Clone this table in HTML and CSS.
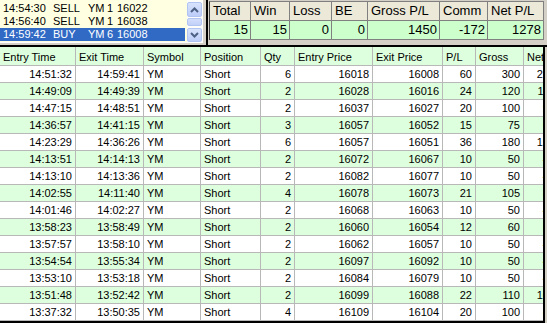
FILE: index.html
```html
<!DOCTYPE html>
<html>
<head>
    <title>Trade Log</title>
    <link rel="stylesheet" href="styles.css">
</head>
<body>
    <div class="top">
        <div class="list">
            <div class="items">
                <div class="item"><span class="t">14:54:30</span><span class="side">SELL</span><span class="sym">YM</span><span class="qty">1</span><span>16022</span></div>
                <div class="item"><span class="t">14:56:40</span><span class="side">SELL</span><span class="sym">YM</span><span class="qty">1</span><span>16038</span></div>
                <div class="item sel"><span class="t">14:59:42</span><span class="side">BUY</span><span class="sym">YM</span><span class="qty">6</span><span>16008</span></div>
            </div>
            <div class="sb">
                <div class="sb-btn">
                    <svg width="9" height="6" viewBox="0 0 9 6"><path d="M1 5 L4.5 1.5 L8 5" fill="none" stroke="#4d6185" stroke-width="2"/></svg>
                </div>
                <div class="sb-track"><div class="sb-thumb"></div></div>
                <div class="sb-btn">
                    <svg width="9" height="6" viewBox="0 0 9 6"><path d="M1 1 L4.5 4.5 L8 1" fill="none" stroke="#4d6185" stroke-width="2"/></svg>
                </div>
            </div>
        </div>
        <div class="split"></div>
        <div class="stats">
            <div class="sh">Total</div>
            <div class="sh">Win</div>
            <div class="sh">Loss</div>
            <div class="sh">BE</div>
            <div class="sh">Gross P/L</div>
            <div class="sh">Comm</div>
            <div class="sh">Net P/L</div>
            <div class="sv">15</div>
            <div class="sv">15</div>
            <div class="sv">0</div>
            <div class="sv">0</div>
            <div class="sv">1450</div>
            <div class="sv">-172</div>
            <div class="sv">1278</div>
        </div>
    </div>

    <div class="hline"></div>

    <div class="grid">
        <div class="row head">
            <div>Entry Time</div><div>Exit Time</div><div>Symbol</div><div>Position</div><div>Qty</div>
            <div>Entry Price</div><div>Exit Price</div><div>P/L</div><div>Gross</div><div>Net</div>
        </div>
        <div id="rows"></div>
    </div>

    <script>
        // entry, exit, qty, entry price, exit price, p/l, gross, net
        const trades = [
            ['14:51:32', '14:59:41', 6, 16018, 16008, 60, 300, 276],
            ['14:49:09', '14:49:39', 2, 16028, 16016, 24, 120, 112],
            ['14:47:15', '14:48:51', 2, 16037, 16027, 20, 100, 92],
            ['14:36:57', '14:41:15', 3, 16057, 16052, 15, 75, 63],
            ['14:23:29', '14:36:26', 6, 16057, 16051, 36, 180, 156],
            ['14:13:51', '14:14:13', 2, 16072, 16067, 10, 50, 42],
            ['14:13:10', '14:13:36', 2, 16082, 16077, 10, 50, 42],
            ['14:02:55', '14:11:40', 4, 16078, 16073, 21, 105, 89],
            ['14:01:46', '14:02:27', 2, 16068, 16063, 10, 50, 42],
            ['13:58:23', '13:58:49', 2, 16060, 16054, 12, 60, 52],
            ['13:57:57', '13:58:10', 2, 16062, 16057, 10, 50, 42],
            ['13:54:54', '13:55:34', 2, 16097, 16092, 10, 50, 42],
            ['13:53:10', '13:53:18', 2, 16084, 16079, 10, 50, 42],
            ['13:51:48', '13:52:42', 2, 16099, 16088, 22, 110, 102],
            ['13:37:32', '13:50:35', 4, 16109, 16104, 20, 100, 84]
        ];

        const rowsEl = document.getElementById('rows');
        trades.forEach((t, i) => {
            const row = document.createElement('div');
            row.className = 'row' + (i % 2 ? ' alt' : '');
            row.innerHTML =
                '<div class="r">' + t[0] + '</div>' +
                '<div class="r">' + t[1] + '</div>' +
                '<div>YM</div>' +
                '<div>Short</div>' +
                '<div class="r">' + t[2] + '</div>' +
                '<div class="r">' + t[3] + '</div>' +
                '<div class="r">' + t[4] + '</div>' +
                '<div class="r">' + t[5] + '</div>' +
                '<div class="r">' + t[6] + '</div>' +
                '<div class="r net">' + t[7] + '</div>';
            rowsEl.appendChild(row);
        });
    </script>
</body>
</html>
```

FILE: styles.css
```css
body { margin: 0; width: 547px; height: 323px; overflow: hidden; background: #d4d0c8; font-family: "Liberation Sans", Arial, sans-serif; font-size: 11px; color: #000; }

.top { display: flex; height: 45px; }

.list { display: flex; width: 202px; height: 42px; background: #ffffe1; border-right: 1px solid #fff; border-bottom: 1px solid #fff; }
.items { width: 185px; padding-top: 2px; }
.item { display: flex; height: 13px; line-height: 13px; white-space: nowrap; }
.item.sel { background: #316ac5; color: #fff; }
.item .t { width: 50px; padding-left: 3px; }
.item .side { width: 35px; }
.item .sym { width: 19px; }
.item .qty { width: 10px; }

.sb { width: 15px; margin-left: 2px; padding-top: 2px; display: flex; flex-direction: column; background: #fdfdfa; }
.sb-btn { height: 14px; display: flex; align-items: center; justify-content: center; background: linear-gradient(#d8e3fc, #bccdf8); border: 1px solid #b1c4f2; border-radius: 2px; box-sizing: border-box; }
.sb-btn:first-child { height: 15px; }
.sb-track { height: 11px; padding-top: 1px; box-sizing: border-box; }
.sb-thumb { height: 8px; background: linear-gradient(#d3defb, #c0d0f8); border: 1px solid #b1c4f2; border-radius: 2px; box-sizing: border-box; }

.split { width: 2px; margin: 0 1px 0 3px; background: #000; }

.stats { display: grid; grid-template-columns: 41px 39px 42px 36px 72px 48px 56px; align-self: flex-start; margin-top: 1px; border-left: 1px solid #404040; border-top: 1px solid #808080; font-size: 13px; }
.stats div { height: 19px; line-height: 18px; box-sizing: border-box; border-right: 1px solid #808080; border-bottom: 1px solid #808080; white-space: nowrap; }
.sh { background: #ece9d8; padding-left: 3px; }
.sv { background: #ccffcc; text-align: right; padding-right: 2px; }

.hline { height: 2px; background: #000; }

.grid { width: 543px; border-right: 2px solid #000; border-bottom: 2px solid #000; overflow: hidden; background: #fff; }
.row { display: grid; grid-template-columns: 76px 68px 57px 60px 34px 78px 70px 33px 48px 34px; height: 17px; }
.row div { box-sizing: border-box; border-right: 1px solid #b8b8b8; border-bottom: 1px solid #b8b8b8; padding: 0 3px; line-height: 16px; white-space: nowrap; overflow: hidden; }
.row.alt { background: #ddffdd; }
.row.head { height: 19px; background: #ddffdd; }
.row.head div { padding-top: 2px; }
.row .r { text-align: right; }
.row .net { padding-right: 2px; }
```
